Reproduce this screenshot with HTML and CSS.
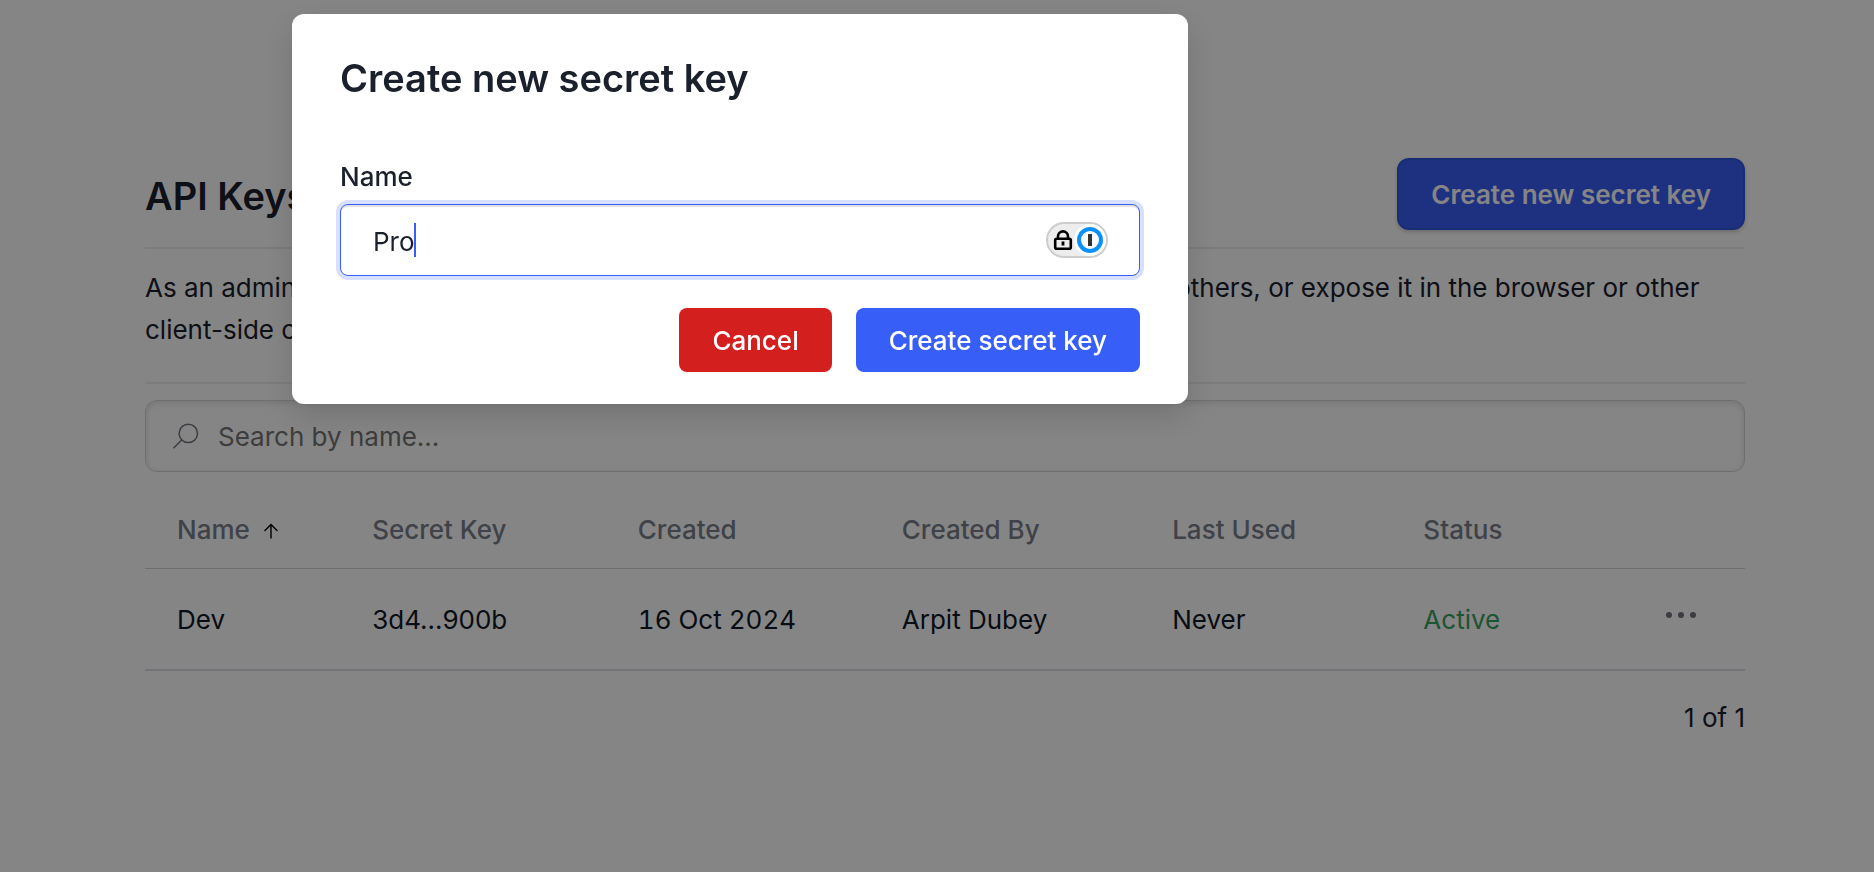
FILE: index.html
```
<!DOCTYPE html>
<html lang="en">
<head>
    <meta charset="UTF-8">
    <meta name="viewport" content="width=device-width, initial-scale=1.0">
    <title>API Keys</title>
    <link rel="stylesheet" href="styles.css">
</head>
<body>
    <main class="page">
        <header class="page-header">
            <h1>API Keys</h1>
            <button type="button" class="btn-new">Create new secret key</button>
        </header>

        <p class="description">As an admin, you can view and manage all the API keys. Do not share your key with others, or expose it in the browser or other client-side code.</p>

        <div class="search">
            <svg width="26" height="26" viewBox="0 0 26 26" fill="none" stroke="currentColor" stroke-width="1.5" stroke-linecap="round" aria-hidden="true">
                <circle cx="15.3" cy="10.4" r="9.2"/>
                <path d="M8.7 17L.9 24.8"/>
            </svg>
            <input type="search" placeholder="Search by name..." aria-label="Search by name">
        </div>

        <table class="keys-table">
            <colgroup>
                <col class="col-name">
                <col class="col-key">
                <col class="col-created">
                <col class="col-by">
                <col class="col-used">
                <col>
                <col class="col-actions">
            </colgroup>
            <thead>
                <tr>
                    <th>Name
                        <svg class="sort" width="16" height="16" viewBox="0 0 16 16" fill="none" stroke="currentColor" stroke-width="1.4" aria-hidden="true">
                            <path d="M8 15.5V1.5M1.5 8L8 1.5L14.5 8"/>
                        </svg>
                    </th>
                    <th>Secret Key</th>
                    <th>Created</th>
                    <th>Created By</th>
                    <th>Last Used</th>
                    <th>Status</th>
                    <th></th>
                </tr>
            </thead>
            <tbody>
                <tr>
                    <td>Dev</td>
                    <td>3d4...900b</td>
                    <td class="date">16 Oct 2024</td>
                    <td>Arpit Dubey</td>
                    <td>Never</td>
                    <td class="active">Active</td>
                    <td>
                        <button type="button" class="btn-more" aria-label="More actions">
                            <svg width="32" height="8" viewBox="0 0 32 8" fill="currentColor" aria-hidden="true">
                                <circle cx="4" cy="4" r="3"/>
                                <circle cx="16" cy="4" r="3"/>
                                <circle cx="28" cy="4" r="3"/>
                            </svg>
                        </button>
                    </td>
                </tr>
            </tbody>
        </table>

        <p class="count">1 of 1</p>
    </main>

    <div class="overlay">
        <form class="modal" role="dialog" aria-modal="true" aria-labelledby="modal-title">
            <h2 id="modal-title">Create new secret key</h2>
            <label for="key-name">Name</label>
            <div class="field">
                <input type="text" id="key-name" value="Pro" autocomplete="off">
                <span class="caret"></span>
                <svg class="lock-badge" width="62" height="36" viewBox="0 0 62 36" fill="none" aria-hidden="true">
                    <rect x="1" y="1" width="60" height="34" rx="17" fill="#ededed" stroke="#cdcdcd" stroke-width="2"/>
                    <circle cx="44" cy="18" r="16" fill="#fff"/>
                    <circle cx="44" cy="18" r="11" stroke="#0a90fb" stroke-width="4"/>
                    <rect x="42" y="12" width="4" height="12" fill="#333"/>
                    <rect x="9.2" y="16.7" width="15.6" height="10" rx="1.5" stroke="#000" stroke-width="2.6"/>
                    <path d="M12 16.5V14.4a5 5 0 0 1 10 0v2.1" stroke="#000" stroke-width="2.6"/>
                    <path d="M17 19.5v4" stroke="#000" stroke-width="2.8"/>
                </svg>
            </div>
            <div class="modal-actions">
                <button type="button" class="btn btn-cancel">Cancel</button>
                <button type="submit" class="btn btn-create">Create secret key</button>
            </div>
        </form>
    </div>
</body>
</html>
```
FILE: styles.css
```
* {
    margin: 0;
    padding: 0;
    box-sizing: border-box;
}

body {
    min-height: 100vh;
    background: #fff;
    color: #1a202c;
    font-family: "Inter", "Liberation Sans", sans-serif;
    font-size: 26px;
    line-height: 42px;
}

button, input {
    font: inherit;
    color: inherit;
}

button {
    cursor: pointer;
}

.page {
    padding: 158px 129px 0 145px;
}

.page-header {
    display: flex;
    justify-content: space-between;
    align-items: center;
    padding-bottom: 17px;
    border-bottom: 2px solid #eeeef1;
}

.page-header h1 {
    padding-top: 4px;
    font-size: 38px;
    font-weight: 600;
}

.btn-new {
    height: 72px;
    padding: 2px 32px 0;
    border: 2px solid #3157e0;
    border-radius: 12px;
    background: #3a5ef5;
    color: #fff;
    font-weight: 600;
    box-shadow: 0 2px 4px rgba(0, 0, 0, 0.2);
}

.description {
    padding: 18px 0 31px;
    border-bottom: 2px solid #eeeef1;
}

.search {
    display: flex;
    align-items: center;
    gap: 19px;
    height: 72px;
    margin-top: 16px;
    padding: 0 27px;
    border: 1px solid #d4d4d8;
    border-radius: 12px;
    color: #71757f;
    box-shadow: inset 0 2px 6px rgba(0, 0, 0, 0.12);
}

.search input {
    flex: 1;
    padding-top: 2px;
    border: none;
    outline: none;
    background: none;
}

.search input::placeholder {
    color: #757575;
    opacity: 1;
}

.keys-table {
    width: 100%;
    margin-top: 16px;
    border-collapse: collapse;
    table-layout: fixed;
    color: #111827;
}

.col-name { width: 12.2%; }
.col-key { width: 16.6%; }
.col-created { width: 16.5%; }
.col-by { width: 16.9%; }
.col-used { width: 15.7%; }
.col-actions { width: 8%; }

.keys-table th {
    height: 80px;
    padding: 4px 0 0 32px;
    border-bottom: 1px solid #d4d4d8;
    color: #7a7f8b;
    font-weight: 500;
    text-align: left;
    white-space: nowrap;
}

.keys-table .sort {
    margin-left: 6px;
    color: #000;
}

.keys-table td {
    height: 102px;
    padding: 2px 0 0 32px;
    border-bottom: 2px solid #dcdce6;
    white-space: nowrap;
}

.keys-table .date {
    font-variant-numeric: tabular-nums;
}

.keys-table .active {
    color: #38a169;
}

.keys-table td:last-child {
    padding: 0 48px 0 0;
}

.btn-more {
    display: block;
    margin-left: auto;
    padding-bottom: 8px;
    border: none;
    background: none;
    color: #71757f;
}

.btn-more svg {
    display: block;
}

.count {
    padding-top: 26px;
    text-align: right;
}

.overlay {
    position: fixed;
    inset: 0;
    display: flex;
    justify-content: center;
    align-items: flex-start;
    padding: 14px 394px 0 0;
    background: rgba(0, 0, 0, 0.48);
}

.modal {
    width: 100%;
    max-width: 896px;
    padding: 40px 48px 32px;
    border-radius: 12px;
    background: #fff;
    box-shadow: 0 12px 32px rgba(0, 0, 0, 0.15);
}

.modal h2 {
    margin-bottom: 56px;
    font-size: 38px;
    font-weight: 600;
    line-height: 48px;
}

.modal label {
    display: block;
    margin-bottom: 8px;
    font-weight: 500;
    line-height: 38px;
}

.field {
    position: relative;
}

.field input {
    display: block;
    width: 100%;
    height: 72px;
    padding: 2px 96px 0 32px;
    border: 1px solid #3a5ef5;
    border-radius: 8px;
    outline: none;
    box-shadow: 0 0 0 4px #d8e0fd, inset 0 2px 1px rgba(0, 0, 0, 0.12);
}

/* text cursor and password manager badge sit on top of the input */
.caret {
    position: absolute;
    top: 19px;
    left: 74px;
    width: 2px;
    height: 34px;
    background: #3a5ef5;
}

.lock-badge {
    position: absolute;
    top: 18px;
    right: 32px;
}

.modal-actions {
    display: flex;
    justify-content: flex-end;
    gap: 24px;
    margin-top: 32px;
}

.btn {
    height: 64px;
    padding: 2px 33px 0;
    border: none;
    border-radius: 8px;
    color: #fff;
    font-weight: 500;
}

.btn-cancel {
    background: #d3201f;
}

.btn-create {
    background: #375ff8;
}
```
